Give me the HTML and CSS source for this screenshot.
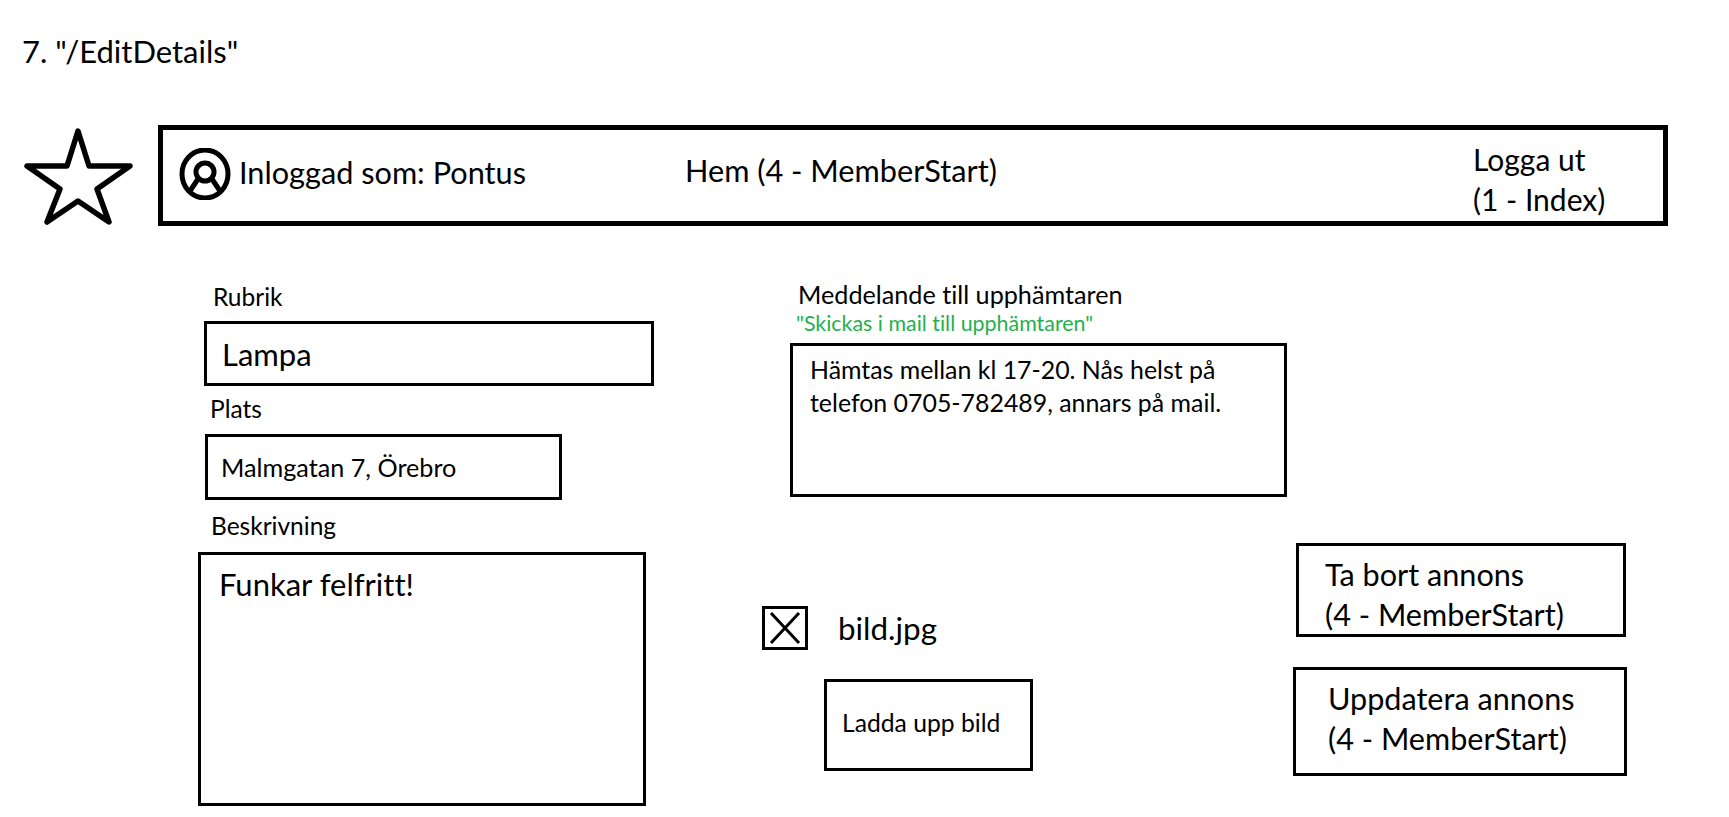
FILE: index.html
```html
<!DOCTYPE html>
<html lang="sv">
<head>
<meta charset="utf-8">
<title>EditDetails</title>
<link rel="stylesheet" href="styles.css">
</head>
<body>
<main class="page">
  <h1 class="title">7. "/EditDetails"</h1>
  <div class="topbar">
    <svg class="star" viewBox="0 0 109 97" aria-hidden="true"><path d="M54 3 L65 38 L106 38 L73 61 L85 94 L54 73 L23 94 L36 61 L3 38 L43 38 Z"/></svg>
    <nav class="bar">
      <svg class="user" viewBox="0 0 52 52" aria-hidden="true"><ellipse cx="26" cy="26" rx="23" ry="24"/><circle cx="26" cy="24" r="9"/><path d="M19 31 L11 43 M33 31 L41 43"/></svg>
      <span class="who">Inloggad som: Pontus</span>
      <span class="home">Hem (4 - MemberStart)</span>
      <span class="logout">Logga ut<br>(1 - Index)</span>
    </nav>
  </div>
  <div class="columns">
    <section class="col-left">
      <div class="label label-rubrik">Rubrik</div>
      <div class="box box-rubrik">Lampa</div>
      <div class="label label-plats">Plats</div>
      <div class="box box-plats">Malmgatan 7, Örebro</div>
      <div class="label label-beskrivning">Beskrivning</div>
      <div class="box box-beskrivning">Funkar felfritt!</div>
    </section>
    <section class="col-mid">
      <div class="label label-meddelande">Meddelande till upphämtaren</div>
      <div class="note">"Skickas i mail till upphämtaren"</div>
      <div class="box box-meddelande">Hämtas mellan kl 17-20. Nås helst på<br>telefon 0705-782489, annars på mail.</div>
      <div class="file-row">
        <svg class="check" viewBox="0 0 46 44" aria-hidden="true"><rect x="1.5" y="1.5" width="43" height="41"/><path d="M9 7 L37 37 M37 7 L9 37"/></svg>
        <span class="file-name">bild.jpg</span>
      </div>
      <div class="box box-upload">Ladda upp bild</div>
    </section>
    <section class="col-right">
      <div class="box box-delete">Ta bort annons<br>(4 - MemberStart)</div>
      <div class="box box-update">Uppdatera annons<br>(4 - MemberStart)</div>
    </section>
  </div>
</main>
</body>
</html>
```
FILE: styles.css
```css
* { box-sizing: border-box; }
html, body { margin: 0; background: #fff; }
body { font-family: Lato, "Open Sans", sans-serif; color: #000; font-variant-ligatures: none; }
.page { width: 1729px; height: 817px; overflow: hidden; }

.title { margin: 35px 0 0; padding-left: 22px; font-size: 31px; line-height: 32px; font-weight: 400; }

.topbar { display: flex; align-items: flex-start; margin-top: 58px; padding-left: 24px; }
.star { width: 109px; height: 97px; margin-top: 3px; margin-right: 25px; flex: none; }
.star path { fill: none; stroke: #000; stroke-width: 5.5; stroke-linejoin: round; }

.bar { display: flex; align-items: center; width: 1510px; height: 101px; border: 5px solid #000; font-size: 30.7px; flex: none; }
.user { width: 52px; height: 52px; margin-left: 16px; flex: none; margin-top: -3px; }
.user ellipse, .user circle, .user path { fill: none; stroke: #000; stroke-width: 5; }
.who { margin-left: 8px; width: 446px; margin-top: -7px; }
.home { width: 788px; margin-top: -11px; }
.logout { line-height: 40px; margin-top: 7px; font-size: 30px; }

.columns { display: flex; margin-top: 58px; align-items: flex-start; }
.col-left { width: 564px; margin-left: 198px; padding-top: 2px; flex: none; }
.col-mid { width: 531px; flex: none; }
.col-right { padding-top: 259px; flex: none; }

.label { font-size: 24.5px; line-height: 24px; }
.box { border: 3px solid #000; }

.label-rubrik { margin-left: 15px; margin-top: -1px; }
.box-rubrik { margin: 12px 0 0 6px; width: 450px; height: 65px; padding-left: 15px; font-size: 31px; line-height: 60px; }
.label-plats { margin: 11px 0 0 12px; }
.box-plats { margin: 13px 0 0 7px; width: 357px; height: 66px; padding-left: 13px; font-size: 25.2px; line-height: 60px; }
.label-beskrivning { margin: 14px 0 0 13px; }
.box-beskrivning { margin-top: 14px; width: 448px; height: 254px; padding: 9px 0 0 18px; font-size: 31px; line-height: 40px; }

.label-meddelande { margin-left: 36px; font-size: 25.2px; margin-top: -2px; }
.note { margin: 7px 0 0 34px; color: #22b14c; font-size: 21.4px; line-height: 20px; }
.box-meddelande { margin: 10px 0 0 28px; width: 497px; height: 154px; padding: 7px 0 0 17px; font-size: 24.9px; line-height: 33px; }

.file-row { display: flex; align-items: center; margin-top: 109px; }
.check { width: 46px; height: 44px; flex: none; }
.check rect, .check path { fill: none; stroke: #000; stroke-width: 3; }
.file-name { margin-left: 30px; font-size: 31.4px; }
.box-upload { margin: 29px 0 0 62px; width: 209px; height: 92px; padding-left: 15px; font-size: 24.7px; line-height: 82px; }

.box-delete { margin-left: 3px; width: 330px; height: 94px; padding: 9px 0 0 26px; font-size: 30.6px; line-height: 40px; }
.box-update { margin-top: 30px; width: 334px; height: 109px; padding: 9px 0 0 32px; font-size: 30.6px; line-height: 40px; }
```
